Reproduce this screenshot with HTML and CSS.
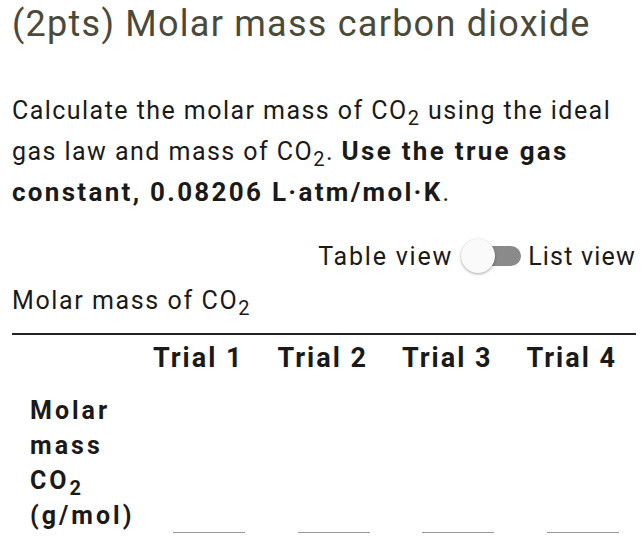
FILE: index.html
```html
<!DOCTYPE html>
<html>
<head>
<meta charset="utf-8">
<link rel="stylesheet" href="styles.css">
</head>
<body>
<h1 class="title">(2pts) Molar mass carbon dioxide</h1>
<p class="prompt">Calculate the molar mass of CO<sub>2</sub> using the ideal gas law and mass of CO<sub>2</sub>. <b>Use the true gas constant, 0.08206 L·atm/mol·K</b>.</p>
<div class="toggle-row">
  <span class="lbl-table">Table view</span>
  <span class="switch"><span class="track"></span><span class="knob"></span></span>
  <span class="lbl-list">List view</span>
</div>
<div class="caption">Molar mass of CO<sub>2</sub></div>
<div class="table">
  <div class="head-row">
    <div class="corner"></div>
    <div class="th">Trial 1</div>
    <div class="th">Trial 2</div>
    <div class="th">Trial 3</div>
    <div class="th">Trial 4</div>
  </div>
  <div class="body-row">
    <div class="rowlabel">Molar<br>mass<br>CO<sub>2</sub><br>(g/mol)</div>
    <div class="cell"><span class="blank"></span></div>
    <div class="cell"><span class="blank"></span></div>
    <div class="cell"><span class="blank"></span></div>
    <div class="cell"><span class="blank"></span></div>
  </div>
</div>
</body>
</html>
```
FILE: styles.css
```css
html, body { margin: 0; padding: 0; background: #fff; }
body {
  font-family: Roboto, "Liberation Sans", sans-serif;
  color: #1a1a1a;
  padding: 0 5px 0 12px;
  overflow: hidden;
}
.title {
  font-weight: 400;
  font-size: 36px;
  line-height: 44px;
  margin: 2px 0 0 0;
  color: #4a4a3a;
  letter-spacing: 1.25px;
}
.prompt {
  font-size: 25px;
  line-height: 41px;
  margin: 44px 0 0 0;
  color: #1a1a1a;
  letter-spacing: 1.45px;
}
.prompt b { font-weight: 700; font-size: 26px; letter-spacing: 2.3px; }
sub { font-size: 0.8em; vertical-align: -0.3em; line-height: 0; }
.toggle-row {
  display: flex;
  justify-content: flex-end;
  align-items: center;
  font-size: 25px;
  margin-top: 23px;
  height: 40px;
}
.lbl-table { letter-spacing: 1.8px; }
.lbl-list { letter-spacing: 1.2px; }
.switch { position: relative; width: 60px; height: 32px; display: inline-block; margin: 0 7px 0 8px; }
.track {
  position: absolute; left: 14px; top: 6px; width: 46px; height: 20px;
  border-radius: 10px; background: #8a8a8a;
}
.knob {
  position: absolute; left: 0; top: -1px; width: 34px; height: 34px; border-radius: 50%;
  background: #fafafa; box-shadow: 0 1px 3px rgba(0,0,0,0.35);
}
.caption {
  font-size: 25px;
  letter-spacing: 1.6px;
  line-height: 32px;
  margin-top: 9px;
  padding-bottom: 16px;
  border-bottom: 2px solid #222;
}
.table { display: flex; flex-direction: column; }
.head-row, .body-row {
  display: grid;
  grid-template-columns: 124px repeat(4, 124.5px);
}
.th {
  font-weight: 700;
  font-size: 27px;
  line-height: 46px;
  text-align: center;
  letter-spacing: 2px;
}
.rowlabel {
  font-weight: 700;
  font-size: 25px;
  line-height: 35px;
  padding: 12px 0 0 18px;
  letter-spacing: 3px;
  white-space: nowrap;
}
.cell { display: flex; align-items: flex-end; justify-content: center; padding-left: 22px; }
.blank { display: block; width: 72px; height: 2px; background: #999; margin-bottom: -1px; }
```
